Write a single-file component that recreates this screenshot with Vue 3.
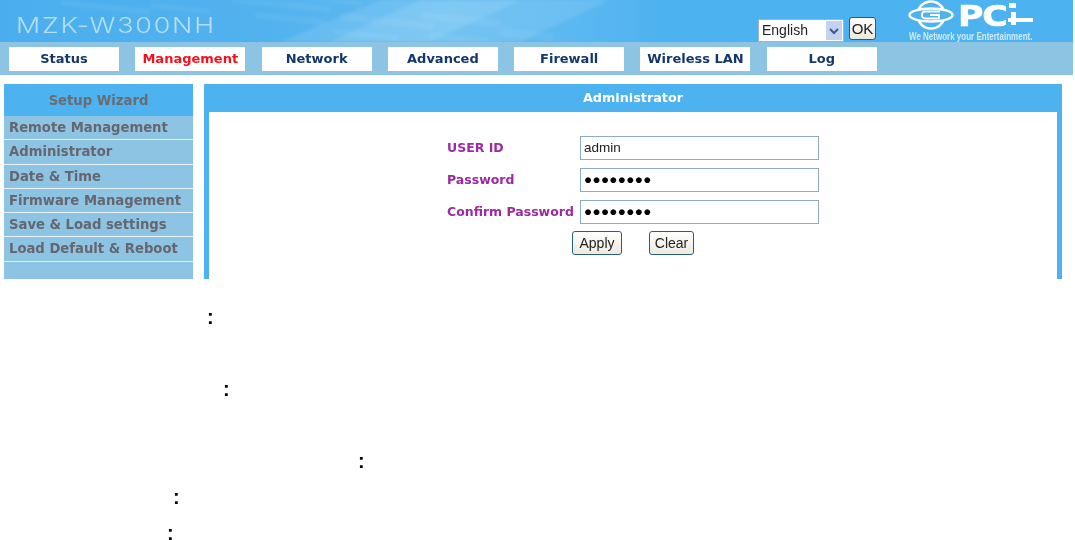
<script setup>
const tabs = ['Status', 'Management', 'Network', 'Advanced', 'Firewall', 'Wireless LAN', 'Log']
const side = ['Remote Management', 'Administrator', 'Date & Time', 'Firmware Management', 'Save & Load settings', 'Load Default & Reboot', '']
const notes = ['n1', 'n2', 'n3', 'n4', 'n5']
const streaks = [
  [20, 2, 70, 5], [60, 30, 90, 6], [150, 24, 60, 5], [230, 8, 100, 7], [255, 22, 70, 6], [300, 0, 60, 5],
  [340, 14, 95, 7], [335, 30, 65, 6], [420, 4, 80, 8], [430, 24, 60, 7], [500, 12, 55, 8], [90, 14, 60, 4]
]
</script>

<template>
  <div class="page">
    <header class="banner">
      <svg class="streaks" width="700" height="42" viewBox="0 0 700 42">
        <polygon points="280,42 380,0 610,0 520,42" fill="#fff" opacity=".1"/>
        <polygon points="330,42 420,0 520,0 430,42" fill="#fff" opacity=".1"/>
        <rect v-for="(s, i) in streaks" :key="i" :x="s[0]" :y="s[1]" :width="s[2]" :height="s[3]" fill="#fff" opacity=".06" transform="rotate(6 350 20)"/>
      </svg>
      <div class="model">MZK-W300NH</div>
      <div class="lang">
        <div class="select"><span>English</span><i class="arrow"><svg width="16" height="19" viewBox="0 0 16 19"><path d="M4 8l4 4 4-4" fill="none" stroke="#3f5a8a" stroke-width="2"/></svg></i></div>
        <button class="ok">OK</button>
      </div>
      <div class="logo">
        <svg class="globe" width="46" height="30" viewBox="0 0 46 30">
          <circle cx="23" cy="15" r="13.5" fill="none" stroke="#fff" stroke-width="2.6"/>
          <ellipse cx="23" cy="15" rx="21.5" ry="6.5" fill="#4db2f0" stroke="#fff" stroke-width="2.4"/>
          <path d="M32 11.5H17q-3 0-3 3.5t3 3.5H31V15H22" fill="none" stroke="#fff" stroke-width="1.8"/>
        </svg>
        <span class="pci">PC</span>
        <svg class="imark" width="26" height="24" viewBox="0 0 26 24">
          <rect x="1" y="0" width="7" height="5" fill="#fff"/>
          <rect x="3" y="9" width="5" height="13" fill="#fff"/>
          <rect x="0" y="15" width="25" height="4" fill="#fff"/>
        </svg>
        <span class="tag">We Network your Entertainment.</span>
      </div>
    </header>
    <nav class="nav">
      <a v-for="t in tabs" :key="t" class="tab" :class="{ on: t === 'Management' }">{{ t }}</a>
    </nav>
    <main class="main">
      <aside class="side">
        <div class="wizard">Setup Wizard</div>
        <div v-for="(s, i) in side" :key="i" class="item" :class="{ last: !s }">{{ s }}</div>
      </aside>
      <section class="panel">
        <h1 class="head">Administrator</h1>
        <div class="body">
          <div class="form">
            <label>USER ID</label><div class="input">admin</div>
            <label>Password</label><div class="input dots">●●●●●●●●</div>
            <label>Confirm Password</label><div class="input dots">●●●●●●●●</div>
          </div>
          <div class="btns">
            <button class="btn apply">Apply</button>
            <button class="btn clear">Clear</button>
          </div>
        </div>
      </section>
    </main>
    <div class="notes">
      <p v-for="n in notes" :key="n" :class="['note', n]">:</p>
    </div>
  </div>
</template>

<style>
html, body { margin: 0; background: #fff; }
</style>

<style scoped>
.page { width: 1075px; height: 540px; overflow: hidden; background: #fff; font-family: "Liberation Sans", Arial, sans-serif; filter: blur(.35px); }
.banner { position: relative; width: 1073px; height: 42px; overflow: hidden; display: flex; align-items: flex-start;
  background: linear-gradient(90deg, #4aaeee 0, #52b2ee 25%, #62bcf1 42%, #5cb8f1 53%, #4db2f0 62%, #4db2f0 100%); }
.streaks { position: absolute; left: 0; top: 0; filter: blur(1.5px); }
.model { position: relative; margin: 13px 0 0 16px; width: 200px; font-size: 22px; line-height: 24px; color: #b4dff7; letter-spacing: 1.5px; font-family: "Inter", "Liberation Sans", sans-serif; font-weight: 300; white-space: nowrap; transform: scaleX(1.22); transform-origin: left; }
.lang { position: relative; margin: 17px 0 0 542px; display: flex; gap: 5px; align-items: flex-start; }
.select { box-sizing: border-box; width: 86px; height: 23px; margin-top: 2px; background: #fff; border: 1px solid #9fb3c8; display: flex; justify-content: space-between; padding: 1px; font-size: 14px; line-height: 19px; color: #222; }
.select span { padding-left: 2px; }
.arrow { display: block; width: 16px; height: 19px; background: #c4d3f4; }
.ok { box-sizing: border-box; width: 27px; height: 23px; padding: 0; border: 1px solid #46525c; border-radius: 3px; background: linear-gradient(#fff, #ece9dd); font: 15px/20px "Liberation Sans", sans-serif; color: #222; }
.logo { position: absolute; left: 908px; top: 0; width: 128px; height: 42px; }
.globe { position: absolute; left: 0; top: 0; }
.pci { position: absolute; left: 50px; top: 2px; font: bold 28px/30px "DejaVu Sans", sans-serif; color: #fff; -webkit-text-stroke: .6px #fff; transform: scaleX(1.24); transform-origin: left; letter-spacing: -1px; }
.imark { position: absolute; left: 100px; top: 3px; }
.tag { position: absolute; left: 1px; top: 31px; font: bold 10px/11px "Liberation Sans", sans-serif; color: #cfeafa; white-space: nowrap; transform: scaleX(.8); transform-origin: left; }
.nav { width: 1073px; height: 33px; box-sizing: border-box; background: #8dc4e4; padding: 5px 0 0 9px; display: flex; gap: 16.3px; }
.tab { width: 110px; height: 24px; background: #fff; color: #14386e; font: bold 13px/24px "DejaVu Sans", sans-serif; text-align: center; }
.tab.on { color: #f4101c; }
.main { width: 1062px; height: 195px; margin-top: 9px; padding-left: 4px; box-sizing: border-box; display: flex; gap: 11px; }
.side { width: 189px; background: #8dc4e4; flex: none; height: 195px; display: flex; flex-direction: column; }
.wizard { height: 32px; background: #4db2f0; color: #6b6b72; font: bold 13.2px/33px "DejaVu Sans", sans-serif; text-align: center; }
.item { box-sizing: border-box; height: 24.3px; padding-left: 5px; color: #66666e; font: bold 13.2px/24px "DejaVu Sans", sans-serif; border-bottom: 1px solid #e8f3fa; white-space: nowrap; }
.item.last { border: 0; flex: 1; }
.panel { flex: 1; background: #4db2f0; padding: 0 5px; display: flex; flex-direction: column; }
.head { margin: 0; height: 28px; color: #fff; font: bold 12.8px/27px "DejaVu Sans", sans-serif; text-align: center; }
.body { flex: 1; background: #fff; padding-top: 24px; }
.form { display: grid; grid-template-columns: 133px 239px; grid-auto-rows: 24px; row-gap: 8px; margin-left: 238px; align-items: center; }
.form label { color: #9c2aa0; font: bold 12.5px/24px "DejaVu Sans", sans-serif; white-space: nowrap; }
.input { box-sizing: border-box; height: 24px; border: 1px solid #8faac6; padding-left: 3px; font-size: 13.5px; line-height: 22px; color: #222; }
.dots { font-size: 13.5px; color: #000; letter-spacing: .3px; line-height: 22px; }
.btns { display: flex; margin: 7px 0 0 363px; gap: 27px; }
.btn { box-sizing: border-box; height: 24px; padding: 0; border: 1px solid #2b5c86; border-radius: 3px; background: linear-gradient(#fff, #eceadf); font: 14px/20px "Liberation Sans", sans-serif; color: #222; }
.apply { width: 50px; }
.clear { width: 45px; }
.notes { display: flow-root; }
.note { margin: 0; font: bold 20px/14px "Liberation Sans", sans-serif; color: #000; height: 14px; }
.n1 { margin-top: 31px; padding-left: 207px; }
.n2 { margin-top: 58px; padding-left: 223px; }
.n3 { margin-top: 58px; padding-left: 358px; }
.n4 { margin-top: 22px; padding-left: 173px; }
.n5 { margin-top: 22px; padding-left: 167px; }
</style>
